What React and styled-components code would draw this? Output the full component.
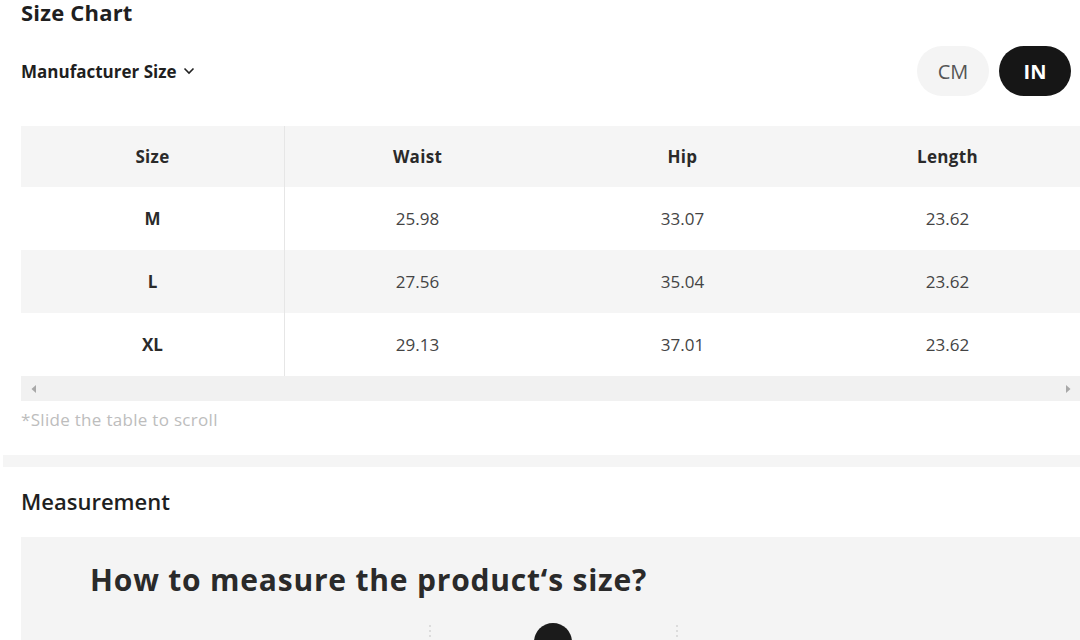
import styled, { createGlobalStyle } from "styled-components";

const GlobalStyle = createGlobalStyle`
  html, body {
    margin: 0;
    padding: 0;
    background: #ffffff;
    font-family: "Open Sans", Lato, Arial, sans-serif;
    color: #222222;
    overflow: hidden;
  }
`;

const columns = ["Size", "Waist", "Hip", "Length"];
const rows = [
  ["M", "25.98", "33.07", "23.62"],
  ["L", "27.56", "35.04", "23.62"],
  ["XL", "29.13", "37.01", "23.62"],
];

export default function App() {
  return (
    <Page>
      <GlobalStyle />
      <SizeSection>
        <Title>Size Chart</Title>
        <Toolbar>
          <SizeSelect>
            Manufacturer Size
            <svg width="12" height="8" viewBox="0 0 12 8">
              <path d="M1.5 1.5 L6 6 L10.5 1.5" fill="none" stroke="#222" strokeWidth="1.6" />
            </svg>
          </SizeSelect>
          <UnitToggle>
            <UnitButton>CM</UnitButton>
            <UnitButton active>IN</UnitButton>
          </UnitToggle>
        </Toolbar>

        <TableScroller>
          <Table>
            <HeaderRow>
              {columns.map((c, i) => (
                <HeadCell key={c} first={i === 0}>
                  {c}
                </HeadCell>
              ))}
            </HeaderRow>
            {rows.map((r, ri) => (
              <Row key={r[0]} striped={ri % 2 === 1}>
                {r.map((v, i) => (
                  <Cell key={i} first={i === 0}>
                    {v}
                  </Cell>
                ))}
              </Row>
            ))}
          </Table>
          <ScrollBar>
            <svg width="6" height="8" viewBox="0 0 6 8">
              <path d="M5 0 L0.5 4 L5 8 Z" fill="#a8a8a8" />
            </svg>
            <svg width="6" height="8" viewBox="0 0 6 8">
              <path d="M1 0 L5.5 4 L1 8 Z" fill="#a8a8a8" />
            </svg>
          </ScrollBar>
        </TableScroller>
        <Hint>*Slide the table to scroll</Hint>
      </SizeSection>

      <Divider />

      <MeasureSection>
        <SubTitle>Measurement</SubTitle>
        <MeasureCard>
          <MeasureHeading>How to measure the product‘s size?</MeasureHeading>
          <Figure>
            <svg width="300" height="20" viewBox="0 0 300 20">
              <path d="M50 4 V20" stroke="#c4c4c4" strokeWidth="1" strokeDasharray="2 3" />
              <path d="M297 4 V20" stroke="#c4c4c4" strokeWidth="1" strokeDasharray="2 3" />
              <circle cx="173" cy="21" r="19" fill="#1b1b1b" />
            </svg>
          </Figure>
        </MeasureCard>
      </MeasureSection>
    </Page>
  );
}

const Page = styled.div`
  width: 1080px;
  height: 640px;
  overflow: hidden;
  padding-left: 3px;
  box-sizing: border-box;
`;

// Size chart
const SizeSection = styled.section`
  padding-left: 18px;
`;

const Title = styled.h2`
  margin: 0;
  font-size: 22px;
  font-weight: 700;
  line-height: 24px;
  letter-spacing: 0.2px;
  color: #1f1f1f;
`;

const Toolbar = styled.div`
  display: flex;
  justify-content: space-between;
  align-items: center;
  margin-top: 22px;
  padding-right: 9px;
`;

const SizeSelect = styled.div`
  display: flex;
  align-items: center;
  gap: 6px;
  font-size: 17px;
  font-weight: 700;
  color: #1f1f1f;
`;

const UnitToggle = styled.div`
  display: flex;
  gap: 10px;
`;

const UnitButton = styled.div`
  width: 72px;
  height: 50px;
  border-radius: 25px;
  display: flex;
  align-items: center;
  justify-content: center;
  font-size: 20px;
  background: ${({ active }) => (active ? "#161616" : "#f4f4f4")};
  color: ${({ active }) => (active ? "#ffffff" : "#555555")};
  font-weight: ${({ active }) => (active ? 700 : 400)};
`;

const TableScroller = styled.div`
  margin-top: 30px;
  width: 1059px;
`;

const Table = styled.div`
  display: grid;
  grid-template-columns: 264px 265px 265px 265px;
`;

const HeaderRow = styled.div`
  display: contents;
`;

const Row = styled.div`
  display: contents;
  & > div {
    background: ${({ striped }) => (striped ? "#f5f5f5" : "#ffffff")};
  }
`;

const HeadCell = styled.div`
  height: 61px;
  display: flex;
  align-items: center;
  justify-content: center;
  background: #f5f5f5;
  font-size: 17px;
  font-weight: 700;
  letter-spacing: 0.3px;
  color: #2a2a2a;
  border-right: ${({ first }) => (first ? "1px solid #e6e6e6" : "none")};
`;

const Cell = styled.div`
  height: 63px;
  display: flex;
  align-items: center;
  justify-content: center;
  font-size: 17px;
  font-weight: ${({ first }) => (first ? 700 : 400)};
  color: ${({ first }) => (first ? "#2a2a2a" : "#444444")};
  border-right: ${({ first }) => (first ? "1px solid #e6e6e6" : "none")};
`;

const ScrollBar = styled.div`
  height: 25px;
  background: #f1f1f1;
  display: flex;
  align-items: center;
  justify-content: space-between;
  padding: 0 9px 0 10px;
`;

const Hint = styled.p`
  margin: 8px 0 0;
  font-size: 17px;
  letter-spacing: 0.3px;
  color: #bdbdbd;
  line-height: 22px;
`;

const Divider = styled.div`
  height: 12px;
  background: #f5f5f5;
  margin-top: 24px;
`;

// Measurement
const MeasureSection = styled.section`
  padding-left: 18px;
`;

const SubTitle = styled.h3`
  margin: 22px 0 0;
  font-size: 22px;
  font-weight: 600;
  line-height: 24px;
  color: #1f1f1f;
`;

const MeasureCard = styled.div`
  margin-top: 24px;
  background: #f4f4f4;
  height: 140px;
  padding: 24px 0 0 69px;
  box-sizing: border-box;
`;

const MeasureHeading = styled.div`
  font-size: 30px;
  font-weight: 700;
  letter-spacing: 0.8px;
  color: #2a2a2a;
  line-height: 38px;
`;

const Figure = styled.div`
  margin-top: 22px;
  padding-left: 290px;
`;
